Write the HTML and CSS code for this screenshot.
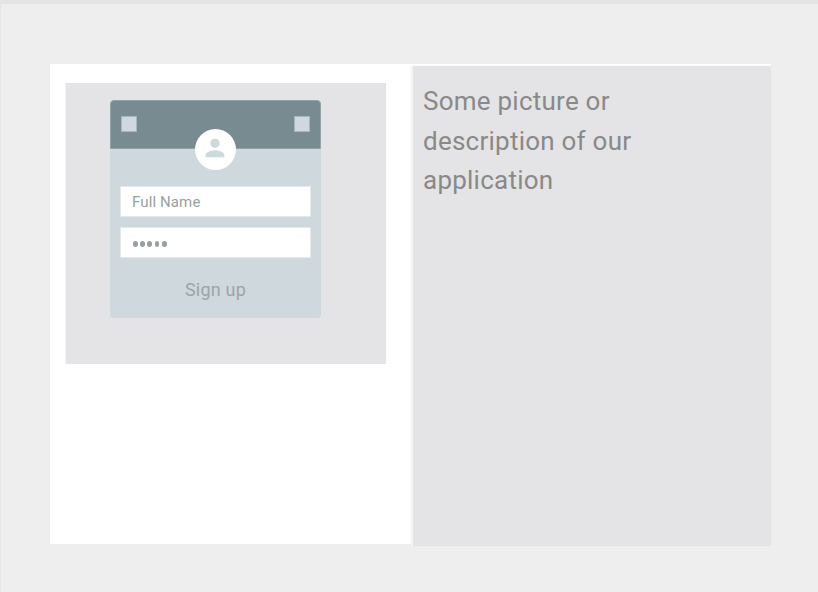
FILE: index.html
```html
<!DOCTYPE html>
<html lang="en">
<head>
<meta charset="utf-8">
<title>Sign up</title>
<link rel="stylesheet" href="styles.css">
</head>
<body>
<main class="sheet">
  <section class="left">
    <div class="stage">
      <div class="card">
        <header class="card-head">
          <span class="square"></span>
          <span class="square"></span>
          <div class="avatar">
            <svg viewBox="0 0 24 24" width="28" height="28"><path fill="#cfd8dc" d="M12 12c2.21 0 4-1.790 4-4s-1.790-4-4-4-4 1.790-4 4 1.790 4 4 4zm0 2c-2.670 0-8 1.340-8 4v2h16v-2c0-2.660-5.330-4-8-4z"/></svg>
          </div>
        </header>
        <div class="fields">
          <div class="field">Full Name</div>
          <div class="field dots"><i></i><i></i><i></i><i></i><i></i></div>
          <div class="submit">Sign up</div>
        </div>
      </div>
    </div>
  </section>
  <section class="right">
    <p class="blurb">Some picture or<br>description of our<br>application</p>
  </section>
</main>
</body>
</html>
```
FILE: styles.css
```css
* { box-sizing: border-box; }
body {
  margin: 0;
  height: 592px;
  overflow: hidden;
  padding: 60px 47px 0 49px;
  background: #eeeeee;
  border-top: 4px solid #e4e4e4;
  border-left: 1px solid #e6e6e6;
  font-family: Roboto, sans-serif;
}
.sheet {
  display: flex;
  width: 721px;
  height: 480px;
  background: #fff;
}
.left {
  width: 361px;
  padding: 19px 0 0 16px;
}
.stage {
  width: 320px;
  height: 281px;
  padding: 17px 0 0 44px;
  background: #e4e4e6;
  box-shadow: -1px 0 0 #f2f2f3;
}
.card {
  width: 211px;
  height: 218px;
  background: #cfd8dd;
  border-radius: 4px;
}
.card-head {
  position: relative;
  display: flex;
  justify-content: space-between;
  height: 49px;
  padding: 15px 10px 0;
  background: #788b90;
  border: 1px solid #93a4a9;
  border-radius: 4px 4px 0 0;
}
.square {
  width: 16px;
  height: 16px;
  background: #cfd8de;
  border: 1px solid #a9b6bc;
}
.avatar {
  position: absolute;
  left: 84px;
  top: 27.5px;
  display: flex;
  justify-content: center;
  width: 41px;
  height: 41px;
  padding-top: 5.5px;
  background: #fff;
  border-radius: 50%;
}
.avatar svg {
  flex: none;
  margin-right: 1px;
}
.fields {
  display: flex;
  flex-direction: column;
  gap: 10px;
  padding: 37px 10px 0;
}
.field {
  height: 31px;
  padding-left: 11px;
  background: #fff;
  border: 1px solid #e2e8eb;
  color: #97a1a4;
  font-size: 15px;
  line-height: 30px;
  letter-spacing: 0.12px;
}
.dots {
  display: flex;
  align-items: center;
  gap: 2.4px;
  padding: 3px 0 0 12px;
}
.dots i {
  width: 4.8px;
  height: 5.4px;
  background: #97a1a4;
  border-radius: 50%;
}
.submit {
  margin-top: 10px;
  text-align: center;
  color: #9da5a7;
  font-size: 18px;
  line-height: 24px;
  letter-spacing: 0.2px;
}
.right {
  width: 360px;
  height: 480px;
  margin-top: 2px;
  padding: 16px 0 0 10px;
  background: #e4e4e6;
  border-left: 2px solid #f4f4f4;
  box-shadow: 0 0 1px #e4e4e6;
}
.blurb {
  margin: 0;
  color: #898989;
  font-size: 26px;
  line-height: 39.5px;
  letter-spacing: 0.24px;
}
```
